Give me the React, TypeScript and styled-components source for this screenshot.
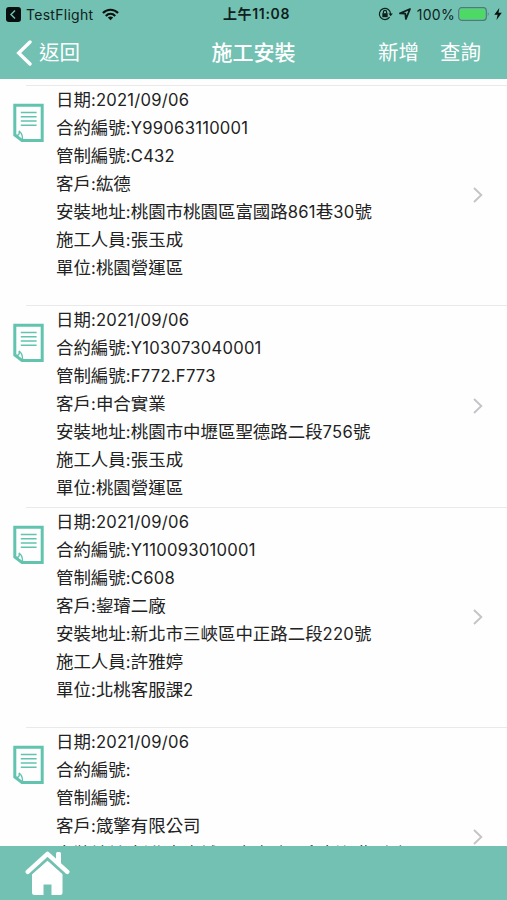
import React from "react";
import styled, { createGlobalStyle } from "styled-components";

const Global = createGlobalStyle`
  * { box-sizing: border-box; }
  body { margin: 0; background: #fff; font-family: Inter, "Noto Sans CJK TC", sans-serif; }
`;
const TEAL = "#73c1b2";

const Screen = styled.div`
  width: 507px;
  height: 900px;
  display: flex;
  flex-direction: column;
  overflow: hidden;
  background: #fefefe;
`;
const StatusBar = styled.div`
  height: 28px;
  flex: none;
  display: grid;
  grid-template-columns: 1fr auto 1fr;
  align-items: center;
  padding: 0 5px 0 6px;
  background: ${TEAL};
  color: #10211d;
  font-size: 14px;
`;
const StatusGroup = styled.div<{ $end?: boolean }>`
  display: flex;
  align-items: center;
  justify-content: ${(p) => (p.$end ? "flex-end" : "flex-start")};
`;
const AppName = styled.span`
  margin: 0 9px 0 5px;
  font-size: 14px;
  letter-spacing: 0.28px;
`;
const Clock = styled.div`
  padding-left: 5px;
  font-size: 14px;
  font-weight: 600;
  line-height: 20px;
  letter-spacing: 0.65px;
`;
const Percent = styled.span`
  margin: 0 3px 0 6px;
  font-size: 14px;
  letter-spacing: 0.3px;
`;
const NavBar = styled.div`
  height: 51px;
  flex: none;
  display: grid;
  grid-template-columns: 1fr auto 1fr;
  align-items: center;
  padding: 1px 26px 2px 16px;
  background: ${TEAL};
  color: #fff;
  font-size: 20.5px;
  line-height: 30px;
`;
const NavTitle = styled.div`
  padding-left: 10px;
  font-weight: 500;
  font-size: 21px;
`;
const NavGroup = styled.div<{ $end?: boolean }>`
  display: flex;
  align-items: center;
  gap: ${(p) => (p.$end ? "21px" : "6px")};
  justify-content: ${(p) => (p.$end ? "flex-end" : "flex-start")};
`;
const List = styled.div`
  flex: 1;
  min-height: 0;
  overflow: hidden;
  padding-top: 6px;
`;
const Row = styled.div<{ $height: number }>`
  height: ${(p) => p.$height}px;
  display: flex;
  padding-left: 13px;
`;
const IconSlot = styled.div`
  width: 13px;
  flex: none;
  overflow: visible;
  padding-top: 18px;
`;
const RowBody = styled.div`
  flex: 1;
  display: flex;
  justify-content: space-between;
  border-top: 1px solid #e9e9ea;
  padding: 0 24px 0 30px;
`;
const Fields = styled.div`
  color: #222;
  white-space: nowrap;
`;
const Field = styled.div`
  height: 28px;
  line-height: 28px;
  font-size: 17.45px;
`;
const Latin = styled.span`
  font-size: 16.6px;
  letter-spacing: 0.25px;
`;
const ChevronSlot = styled.div`
  align-self: center;
  display: flex;
  padding-bottom: 2px;
`;
const TabBar = styled.div`
  height: 54px;
  flex: none;
  padding: 4px 0 0 25px;
  background: ${TEAL};
`;

const Mixed = ({ text }: { text: string }) => (
  <>
    {text.split(/([\x20-\x7e]+)/).map((part, i) => (i % 2 ? <Latin key={i}>{part}</Latin> : part))}
  </>
);

const DocumentIcon = () => (
  <svg width="32" height="40" viewBox="0 0 32 40" fill="none" stroke="#62c3ae">
    <path d="M1.8 2.2H29.2V37.5H9L1.8 32Z" strokeWidth="3" />
    <path d="M6 28Q9.5 30 9.6 36.5M6 28Q7.2 32 3.5 32.5" strokeWidth="1.4" />
    <path d="M7.8 9.5H23.6M7.8 13.8H23.6M7.8 18H23.6M7.8 22.3H23.6" strokeWidth="1.5" />
  </svg>
);
const Disclosure = () => (
  <svg width="10" height="16" viewBox="0 0 10 16" fill="none" stroke="#c4c4c7" strokeWidth="1.9">
    <path d="M1 1L8.3 8L1 15" />
  </svg>
);
const BackAppIcon = () => (
  <svg width="15" height="15" viewBox="0 0 15 15">
    <rect width="15" height="15" rx="3" fill="#07100e" />
    <path d="M9 3.5L5 7.5L9 11.5" fill="none" stroke={TEAL} strokeWidth="1.5" />
  </svg>
);
const WifiIcon = () => (
  <svg width="17" height="13" viewBox="0 0 18 13" fill="none" stroke="#07100e" strokeWidth="2.3">
    <path d="M1 5C5.5 .3 12.5 .3 17 5M4 8C7 5.1 11 5.1 14 8" />
    <path d="M9 12.5L6.2 9.7Q9 7.5 11.8 9.7Z" fill="#07100e" stroke="none" />
  </svg>
);
const LockIcon = () => (
  <svg width="15" height="14" viewBox="0 0 15 14" fill="none" stroke="#10211d" strokeWidth="1.2">
    <path d="M11.6 10.2A5.6 5.6 0 1 1 12.6 7" />
    <path d="M10.5 6.5H14.8L12.7 9.2Z" fill="#10211d" stroke="none" />
    <rect x="4.3" y="6.2" width="5.4" height="4" fill="#10211d" stroke="none" />
    <path d="M5.4 6.5V5A1.6 1.6 0 0 1 8.6 5V6.5" />
  </svg>
);
const LocationSlot = styled.span`
  display: flex;
  margin-left: 6px;
`;
const LocationIcon = () => (
  <svg width="12" height="12" viewBox="0 0 12 12" fill="none" stroke="#10211d" strokeWidth="1.8" strokeLinejoin="round">
    <path d="M11 1L1 5.3L6.3 5.7L6.9 11Z" />
  </svg>
);
const BatteryIcon = () => (
  <svg width="32" height="14" viewBox="0 0 32 14">
    <rect x=".7" y=".7" width="27.6" height="12.6" rx="3" fill="none" stroke="#4a7d73" strokeWidth="1.2" />
    <rect x="2" y="2" width="25" height="10" rx="1.5" fill="#4cd964" />
    <path d="M29.8 4.7Q31.6 7 29.8 9.3Z" fill="#4a7d73" />
  </svg>
);
const BoltSlot = styled.span`
  display: flex;
  margin-left: 4px;
`;
const BoltIcon = () => (
  <svg width="8" height="12" viewBox="0 0 8 12" fill="#07100e">
    <path d="M5.3 0L.3 6.8H3.6L2.5 12L7.8 4.8H4.5Z" />
  </svg>
);
const BackIcon = () => (
  <svg width="17" height="26" viewBox="0 0 17 26" fill="none" stroke="#fff" strokeWidth="3.4" strokeLinecap="round">
    <path d="M14 2L2.7 13L14 24" />
  </svg>
);
const HomeIcon = () => (
  <svg width="45" height="46" viewBox="0 0 45 46" fill="#fff">
    <path d="M31 3.5Q31 2 32.5 2H34.5Q36 2 36 3.5V16L31 11Z" />
    <path d="M7 24L22.5 10.5L37.5 24V42.5Q37.5 45 35 45H26.5V34.5H18.5V45H9.5Q7 45 7 42.5Z" />
    <path d="M4.8 25.2L22.5 9.4L40.2 25.2" fill="none" stroke={TEAL} strokeWidth="1.8" />
    <path d="M2.7 21.8L22.5 3.8L42.3 21.8" fill="none" stroke="#fff" strokeWidth="4.4" strokeLinecap="round" strokeLinejoin="round" />
  </svg>
);

const labels = ["日期", "合約編號", "管制編號", "客戶", "安裝地址", "施工人員", "單位"];
const records = [
  { height: 220, values: ["2021/09/06", "Y99063110001", "C432", "紘德", "桃園市桃園區富國路861巷30號", "張玉成", "桃園營運區"] },
  { height: 202, values: ["2021/09/06", "Y103073040001", "F772.F773", "申合實業", "桃園市中壢區聖德路二段756號", "張玉成", "桃園營運區"] },
  { height: 220, values: ["2021/09/06", "Y110093010001", "C608", "鋆璿二廠", "新北市三峽區中正路二段220號", "許雅婷", "北桃客服課2"] },
  { height: 220, values: ["2021/09/06", "", "", "箴擎有限公司", "新北市土城區中央路三段新興街號之二"] },
];

export default function App() {
  return (
    <Screen>
      <Global />
      <StatusBar>
        <StatusGroup>
          <BackAppIcon />
          <AppName>TestFlight</AppName>
          <WifiIcon />
        </StatusGroup>
        <Clock>上午11:08</Clock>
        <StatusGroup $end>
          <LockIcon />
          <LocationSlot>
            <LocationIcon />
          </LocationSlot>
          <Percent>100%</Percent>
          <BatteryIcon />
          <BoltSlot>
            <BoltIcon />
          </BoltSlot>
        </StatusGroup>
      </StatusBar>
      <NavBar>
        <NavGroup>
          <BackIcon />
          <span>返回</span>
        </NavGroup>
        <NavTitle>施工安裝</NavTitle>
        <NavGroup $end>
          <span>新增</span>
          <span>查詢</span>
        </NavGroup>
      </NavBar>
      <List>
        {records.map((r, i) => (
          <Row key={i} $height={r.height}>
            <IconSlot>
              <DocumentIcon />
            </IconSlot>
            <RowBody>
              <Fields>
                {r.values.map((v, j) => (
                  <Field key={j}>
                    <Mixed text={`${labels[j]}:${v}`} />
                  </Field>
                ))}
              </Fields>
              <ChevronSlot>
                <Disclosure />
              </ChevronSlot>
            </RowBody>
          </Row>
        ))}
      </List>
      <TabBar>
        <HomeIcon />
      </TabBar>
    </Screen>
  );
}
